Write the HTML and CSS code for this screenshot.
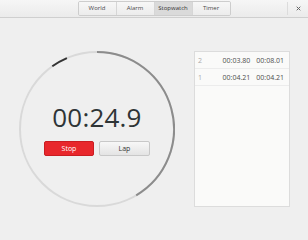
FILE: index.html
```html
<!DOCTYPE html>
<html lang="en">
<head>
    <meta charset="UTF-8">
    <meta name="viewport" content="width=device-width, initial-scale=1.0">
    <title>Clocks</title>
    <link rel="stylesheet" href="styles.css">
</head>
<body>
    <div class="headerbar">
        <div class="spacer"></div>
        <div class="tabs">
            <span class="tab">World</span>
            <span class="tab">Alarm</span>
            <span class="tab active">Stopwatch</span>
            <span class="tab">Timer</span>
        </div>
        <div class="spacer end">
            <span class="sep"></span>
            <svg class="close" width="5" height="5" viewBox="0 0 5 5">
                <path d="M0.7 0.7 L4.3 4.3 M4.3 0.7 L0.7 4.3" stroke="#666" stroke-width="1"/>
            </svg>
        </div>
    </div>

    <div class="main">
        <div class="dial">
            <svg class="ring" width="156" height="156" viewBox="0 0 156 156">
                <circle cx="78" cy="78" r="77" fill="none" stroke="#d9d9d9" stroke-width="2"/>
                <path d="M78 1 A77 77 0 0 1 117.2 144.3" fill="none" stroke="#8c8c8c" stroke-width="2"/>
                <path d="M33.3 15.3 A77 77 0 0 1 47.9 7.1" fill="none" stroke="#333" stroke-width="2"/>
            </svg>
            <div class="face">
                <div class="time">00:24.9</div>
                <div class="buttons">
                    <button class="btn stop">Stop</button>
                    <button class="btn lap">Lap</button>
                </div>
            </div>
        </div>

        <div class="laps">
            <div class="row">
                <span class="num">2</span>
                <span class="t">00:03.80</span>
                <span class="t">00:08.01</span>
            </div>
            <div class="row">
                <span class="num">1</span>
                <span class="t">00:04.21</span>
                <span class="t">00:04.21</span>
            </div>
        </div>
    </div>
</body>
</html>
```

FILE: styles.css
```css
body {
    margin: 0;
    padding: 0;
    font-family: 'Open Sans', 'DejaVu Sans', sans-serif;
    background: #efefef;
    color: #2e3436;
    width: 308px;
    height: 240px;
    overflow: hidden;
}

.headerbar {
    height: 17px;
    display: flex;
    align-items: center;
    background: linear-gradient(to bottom, #f6f6f6, #ebebeb);
    border-bottom: 1px solid #cfcfcf;
}

.spacer {
    flex: 1;
    display: flex;
    align-items: center;
    height: 100%;
}

.spacer.end {
    justify-content: flex-end;
}

.sep {
    width: 1px;
    height: 13px;
    background: #dcdcdc;
    margin-right: 8px;
}

.close {
    margin-right: 7px;
}

.tabs {
    display: flex;
    height: 13px;
    border: 1px solid #cdcdcd;
    border-radius: 2px;
    overflow: hidden;
}

.tab {
    width: 37px;
    font-size: 6px;
    line-height: 13px;
    text-align: center;
    color: #4a4a4a;
    background: linear-gradient(to bottom, #f7f7f7, #ececec);
    border-right: 1px solid #d6d6d6;
}

.tab:last-child {
    border-right: none;
}

.tab.active {
    background: #dadada;
    color: #333;
}

.main {
    display: flex;
    padding: 33px 0 0 19px;
    gap: 19px;
}

.dial {
    display: grid;
    width: 156px;
    height: 156px;
}

.ring, .face {
    grid-area: 1 / 1;
}

.face {
    display: flex;
    flex-direction: column;
    align-items: center;
    padding-top: 51px;
}

.time {
    font-size: 26px;
    line-height: 30px;
    color: #2e3436;
    letter-spacing: 0.2px;
}

.buttons {
    display: flex;
    gap: 5px;
    margin-top: 9px;
}

.btn {
    width: 51px;
    height: 15px;
    padding: 0;
    font-family: 'Open Sans', sans-serif;
    font-size: 7px;
    border-radius: 2px;
}

.stop {
    width: 50px;
    background: #e8272c;
    border: 1px solid #c91d22;
    color: white;
}

.lap {
    background: linear-gradient(to bottom, #f7f7f7, #e4e4e4);
    border: 1px solid #c8c8c8;
    color: #333;
}

.laps {
    width: 94px;
    height: 154px;
    background: #fafaf9;
    border: 1px solid #dcdcdc;
}

.row {
    display: flex;
    align-items: center;
    height: 16px;
    border-bottom: 1px solid #ececec;
    padding: 0 5px 0 3px;
    font-size: 7px;
    color: #4d4d4d;
}

.num {
    flex: 1;
    color: #aaa;
}

.t {
    margin-left: 6px;
}
```
